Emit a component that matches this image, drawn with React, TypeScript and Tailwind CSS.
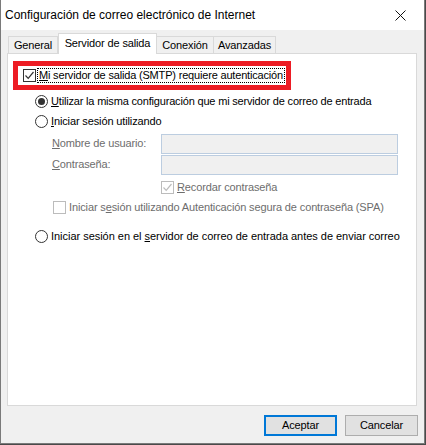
import React from "react";

const font = { fontFamily: '"Liberation Sans", Arial, sans-serif' };

function Check({ checked, disabled }: { checked?: boolean; disabled?: boolean }) {
    const c = disabled ? "#bcbcbc" : "#333333";
    return (
        <span className={`w-[13px] h-[13px] shrink-0 border bg-white flex items-center justify-center ${disabled ? "border-[#bcbcbc]" : "border-[#333333]"}`}>
            {checked && (
                <svg width="11" height="11" viewBox="0 0 11 11">
                    <path d="M1.5 5.5 L4.2 8.3 L9.5 2" fill="none" stroke={c} strokeWidth="1.2" />
                </svg>
            )}
        </span>
    );
}

function Radio({ checked }: { checked?: boolean }) {
    return (
        <span className="w-[13px] h-[13px] shrink-0 rounded-full border border-[#333333] bg-white flex items-center justify-center">
            {checked && <span className="w-[7px] h-[7px] rounded-full bg-[#333333]" />}
        </span>
    );
}

export default function App() {
    return (
        <div className="w-[426px] h-[445px] bg-[#4a4a4a] text-[11px] text-black whitespace-nowrap" style={font}>
            <div className="w-[425px] h-[444px] flex flex-col border-l border-r border-b border-[#7a7a7a] bg-[#f0f0f0]">
                {/* title bar */}
                <div className="h-[30px] bg-white flex items-center justify-between pl-[4px] pr-[18px] shrink-0">
                    <span className="text-[12px]">Configuración de correo electrónico de Internet</span>
                    <svg width="11" height="11" viewBox="0 0 11 11">
                        <path d="M0.5 0.5 L10.5 10.5 M10.5 0.5 L0.5 10.5" stroke="#111" strokeWidth="1" />
                    </svg>
                </div>

                <div className="flex-1 flex flex-col px-[6px] tracking-[-0.13px]">
                    {/* tabs */}
                    <div className="flex items-end pt-[3px] pl-[1px] h-[23px]">
                        <div className="h-[17px] w-[50px] border border-b-0 border-[#d9d9d9] flex items-center justify-center">General</div>
                        <div className="relative z-10 h-[21px] w-[99px] -mb-px bg-white border border-b-0 border-[#d9d9d9] flex items-center justify-center pb-[2px]">Servidor de salida</div>
                        <div className="h-[17px] w-[57px] border border-b-0 border-l-0 border-[#d9d9d9] flex items-center justify-center">Conexión</div>
                        <div className="h-[17px] w-[62px] border border-b-0 border-l-0 border-[#d9d9d9] flex items-center justify-center">Avanzadas</div>
                    </div>

                    {/* panel */}
                    <div className="h-[353px] w-[410px] bg-white border border-[#d9d9d9] flex flex-col pl-[5px] pt-[7px]">
                        <div className="w-[278px] h-[29px] border-[5px] border-[#ed1c24] flex items-center pl-[5px] gap-[1px]">
                            <Check checked />
                            <span className="border border-dotted border-black h-[15px] flex items-center px-[1px] leading-none tracking-[-0.18px]">
                                <span><u>M</u>i servidor de salida (SMTP) requiere autenticación</span>
                            </span>
                        </div>

                        <div className="flex flex-col pl-[22px] mt-[1px]">
                            <label className="flex items-center gap-[3px] h-[20px]">
                                <Radio checked />
                                <span className="tracking-[-0.18px]"><u>U</u>tilizar la misma configuración que mi servidor de correo de entrada</span>
                            </label>
                            <label className="flex items-center gap-[3px] h-[20px]">
                                <Radio />
                                <span><u>I</u>niciar sesión utilizando</span>
                            </label>

                            <div className="flex flex-col pl-[17px] text-[#6d6d6d] mt-[2px]">
                                <div className="flex items-center h-[21px]">
                                    <span className="w-[109px]"><u>N</u>ombre de usuario:</span>
                                    <span className="w-[237px] h-[20px] border border-[#bccde0] bg-[#f0f0f0]" />
                                </div>
                                <div className="flex items-center h-[21px]">
                                    <span className="w-[109px]"><u>C</u>ontraseña:</span>
                                    <span className="w-[237px] h-[20px] border border-[#bccde0] bg-[#f0f0f0]" />
                                </div>
                                <label className="flex items-center gap-[3px] h-[20px] pl-[109px] mt-[2px]">
                                    <Check checked disabled />
                                    <span><u>R</u>ecordar contraseña</span>
                                </label>
                                <label className="flex items-center gap-[3px] h-[20px] pl-[1px]">
                                    <Check disabled />
                                    <span>Iniciar s<u>e</u>sión utilizando Autenticación segura de contraseña (SPA)</span>
                                </label>
                            </div>

                            <label className="flex items-center gap-[3px] h-[20px] mt-[9px]">
                                <Radio />
                                <span className="tracking-[-0.03px]">Iniciar sesión en el <u>s</u>ervidor de correo de entrada antes de enviar correo</span>
                            </label>
                        </div>
                    </div>

                    {/* buttons */}
                    <div className="flex justify-end gap-[8px] mt-[9px] pr-[0px]">
                        <button className="w-[69px] h-[17px] border-2 border-[#0078d7] bg-[#e1e1e1] flex items-center justify-center box-content">Aceptar</button>
                        <button className="w-[71px] h-[19px] border border-[#adadad] bg-[#e1e1e1] flex items-center justify-center box-content">Cancelar</button>
                    </div>
                </div>
            </div>
        </div>
    );
}
